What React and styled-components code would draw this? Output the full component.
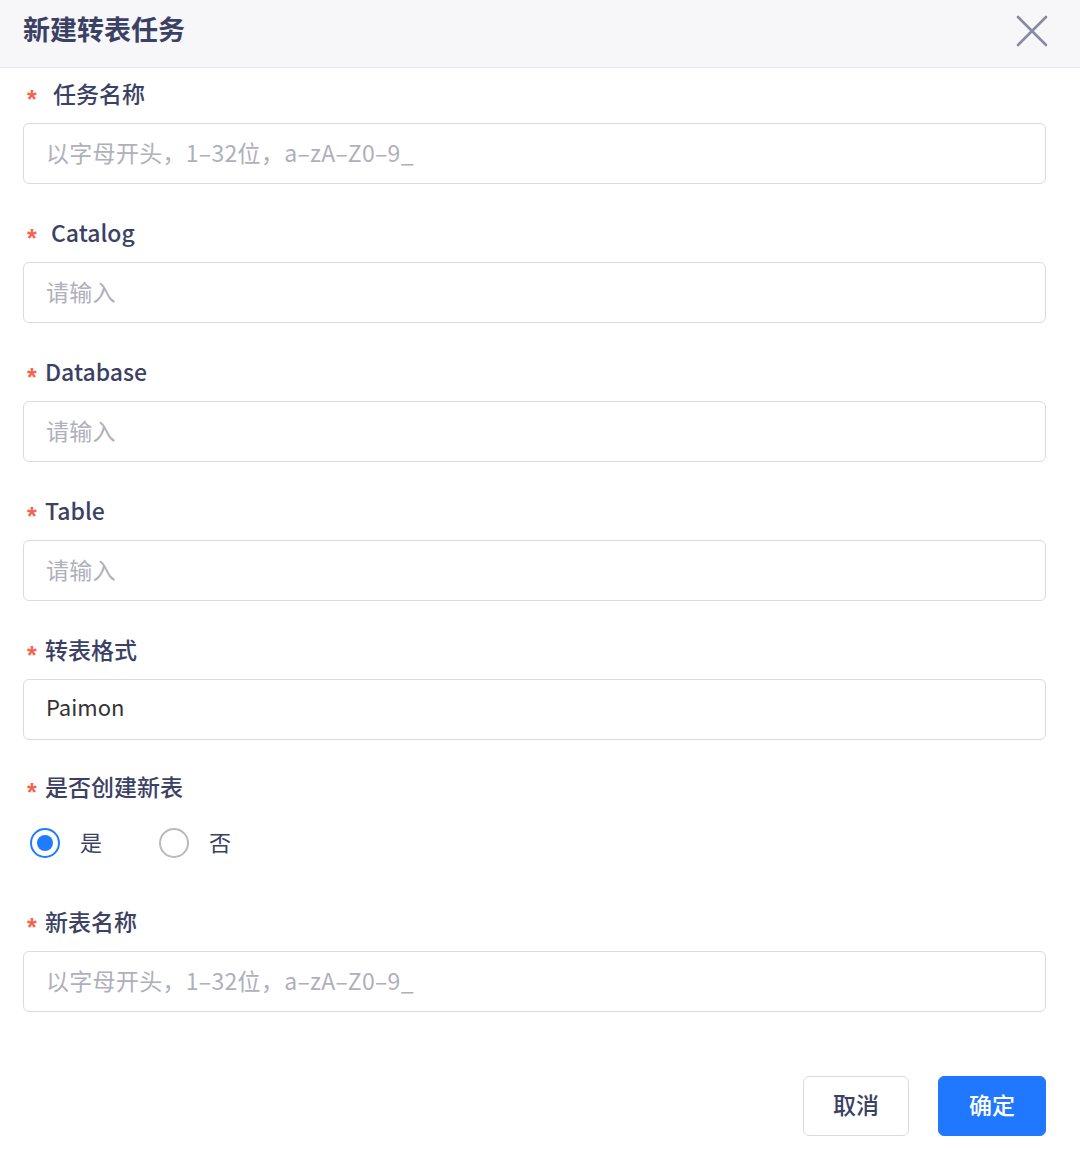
import React from "react"
import styled, { createGlobalStyle } from "styled-components"

const GlobalStyle = createGlobalStyle`
  html, body {
    margin: 0;
    padding: 0;
    background: #ffffff;
    font-family: "Noto Sans CJK SC", "Noto Sans", sans-serif;
  }
`

const Dialog = styled.div`
  width: 1080px;
  height: 1149px;
  background: #ffffff;
  display: flex;
  flex-direction: column;
`

const Header = styled.div`
  height: 67px;
  background: #f7f7f9;
  border-bottom: 1px solid #e6e7ee;
  display: flex;
  align-items: center;
  justify-content: space-between;
  padding: 0 32px 0 23px;
  flex-shrink: 0;
`

const Title = styled.div`
  font-size: 27px;
  font-weight: 700;
  color: #3b4164;
  line-height: 1;
  margin-top: -10px;
`

const CloseButton = styled.div`
  width: 32px;
  height: 32px;
  display: flex;
  align-items: center;
  justify-content: center;
  margin-top: -6px;
`

const Body = styled.div`
  padding: 11px 34px 0 23px;
  display: flex;
  flex-direction: column;
`

const Field = styled.div`
  display: flex;
  flex-direction: column;
  margin-bottom: ${(p) => p.$mb ?? 34}px;
`

const Label = styled.div`
  height: 32px;
  box-sizing: border-box;
  padding: 0 0 4px 4px;
  display: flex;
  align-items: center;
  font-size: 23px;
  font-weight: 500;
  color: #3b4164;
  margin-bottom: ${(p) => p.$mb ?? 12}px;
`

const Star = styled.span`
  color: #f5644f;
  font-family: "Liberation Sans", sans-serif;
  font-size: 25px;
  font-weight: 700;
  width: ${(p) => p.$w}px;
  display: inline-block;
  position: relative;
  top: 6px;
`

const Input = styled.div`
  height: 59px;
  box-sizing: content-box;
  border: 1px solid #d9dae4;
  border-radius: 6px;
  display: flex;
  align-items: center;
  padding: 0 0 0 22px;
  font-size: ${(p) => (p.$placeholder ? 23 : 22)}px;
  letter-spacing: ${(p) => (p.$placeholder ? "0.3px" : "0")};
  color: ${(p) => (p.$placeholder ? "#afb0bb" : "#333333")};
  & > span {
    position: relative;
    top: ${(p) => (p.$placeholder ? -2 : -4)}px;
  }
`

const RadioRow = styled.div`
  display: flex;
  align-items: center;
  padding-left: 7px;
  height: 30px;
`

const RadioItem = styled.div`
  display: flex;
  align-items: center;
  margin-right: 57px;
  font-size: 22px;
  color: #3b4164;
`

const Circle = styled.span`
  width: 30px;
  height: 30px;
  box-sizing: border-box;
  border-radius: 50%;
  border: 2px solid ${(p) => (p.$checked ? "#1f7bff" : "#bababa")};
  display: flex;
  align-items: center;
  justify-content: center;
  margin-right: 20px;
  &::after {
    content: "";
    display: ${(p) => (p.$checked ? "block" : "none")};
    width: 16px;
    height: 16px;
    border-radius: 50%;
    background: #1f7bff;
  }
`

const RadioText = styled.span`
  position: relative;
  top: -2px;
`

const Footer = styled.div`
  display: flex;
  justify-content: flex-end;
  gap: 29px;
  padding: 64px 34px 0 0;
`

const Button = styled.div`
  width: ${(p) => (p.$primary ? 108 : 106)}px;
  height: 60px;
  box-sizing: border-box;
  padding-bottom: 4px;
  border-radius: 6px;
  display: flex;
  align-items: center;
  justify-content: center;
  font-size: 23px;
  font-weight: 500;
  background: ${(p) => (p.$primary ? "#1f78ff" : "#ffffff")};
  color: ${(p) => (p.$primary ? "#ffffff" : "#3b4164")};
  border: 1px solid ${(p) => (p.$primary ? "#1f78ff" : "#d9dae4")};
`

const RULE = "以字母开头，1–32位，a–zA–Z0–9_"

const FormField = ({ label, star = 18, value, placeholder, mb }) => (
  <Field $mb={mb}>
    <Label>
      <Star $w={star}>*</Star>
      {label}
    </Label>
    <Input $placeholder={!value}>
      <span>{value || placeholder}</span>
    </Input>
  </Field>
)

export default function App() {
  return (
    <>
      <GlobalStyle />
      <Dialog>
        <Header>
          <Title>新建转表任务</Title>
          <CloseButton>
            <svg width="32" height="32" viewBox="0 0 32 32">
              <path
                d="M2 2 L30 30 M30 2 L2 30"
                stroke="#888aa2"
                strokeWidth="2.6"
                strokeLinecap="round"
              />
            </svg>
          </CloseButton>
        </Header>
        <Body>
          <FormField label="任务名称" star={26} placeholder={RULE} />
          <FormField label="Catalog" star={24} placeholder="请输入" />
          <FormField label="Database" placeholder="请输入" />
          <FormField label="Table" placeholder="请输入" />
          <FormField label="转表格式" value="Paimon" mb={32} />
          <Field $mb={49}>
            <Label $mb={24}>
              <Star $w={18}>*</Star>
              是否创建新表
            </Label>
            <RadioRow>
              <RadioItem>
                <Circle $checked />
                <RadioText>是</RadioText>
              </RadioItem>
              <RadioItem>
                <Circle />
                <RadioText>否</RadioText>
              </RadioItem>
            </RadioRow>
          </Field>
          <FormField label="新表名称" placeholder={RULE} mb={0} />
        </Body>
        <Footer>
          <Button>取消</Button>
          <Button $primary>确定</Button>
        </Footer>
      </Dialog>
    </>
  )
}
